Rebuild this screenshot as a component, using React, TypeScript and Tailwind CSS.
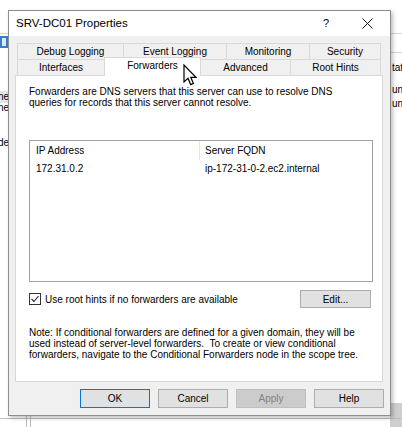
import React from 'react';

const font = { fontFamily: '"Liberation Sans", Arial, sans-serif' };

interface TabProps {
  label: string;
  width: string;
  selected?: boolean;
}

function Tab({ label, width, selected }: TabProps) {
  if (selected) {
    return (
      <div
        className={`${width} -ml-px relative z-10 -mt-[2px] h-[19px] bg-white border border-b-0 border-[#d9d9d9] flex items-start justify-center pt-[1px] text-[10px] leading-[13px] text-black`}
      >
        {label}
      </div>
    );
  }
  return (
    <div
      className={`${width} -ml-px first:ml-0 h-[16px] bg-[#f0f0f0] border border-b-0 border-[#d9d9d9] flex items-center justify-center text-[10px] leading-[13px] text-black`}
    >
      {label}
    </div>
  );
}

function Button({ label, primary, disabled }: { label: string; primary?: boolean; disabled?: boolean }) {
  let cls = 'bg-[#e1e1e1] border-[#adadad] text-black';
  if (primary) cls = 'bg-[#e1e1e1] border-[#0078d7] text-black';
  if (disabled) cls = 'bg-[#cccccc] border-[#bfbfbf] text-[#838383]';
  return (
    <div className={`w-[70px] h-[19px] border ${cls} flex items-center justify-center text-[10px]`}>
      {label}
    </div>
  );
}

export default function App() {
  return (
    <div className="relative w-[402px] h-[427px] bg-white overflow-hidden" style={font}>
      {/* window behind the dialog */}
      <div className="absolute left-0 top-[33px] w-full h-px bg-[#d5d5d5]" />
      <div className="absolute left-0 top-[36px] w-[8px] h-[12px] bg-[#3d7cc9]" />
      <div className="absolute left-[2px] top-[38px] w-[4px] h-[8px] bg-[#dbe8f7]" />
      <div className="absolute left-0 top-[91px] w-[9px] overflow-hidden flex flex-col items-end text-[10px] leading-[12px] text-black">
        <span className="bg-[#e5e5e5] pl-px">ne</span>
        <span className="mt-[-1px]">ne</span>
        <span className="mt-[23px]">de</span>
      </div>
      <div className="absolute left-[390px] top-[52px] w-[12px] h-px bg-[#d5d5d5]" />
      <div className="absolute left-[392px] top-[62px] text-[10px] leading-[12px] text-black">tat</div>
      <div className="absolute left-[392px] top-[84px] text-[10px] leading-[12px] text-black">un</div>
      <div className="absolute left-[392px] top-[98px] text-[10px] leading-[12px] text-black">un</div>
      <div className="absolute left-[390px] top-[403px] w-[12px] h-[24px] bg-[#cfcfcf]" />
      <div className="absolute left-0 top-[418px] w-full h-px bg-[#bdbdbd]" />
      <div className="absolute left-[26px] top-[415px] w-px h-[12px] bg-[#bdbdbd]" />
      <div className="absolute left-[30px] top-[415px] w-px h-[12px] bg-[#bdbdbd]" />

      {/* dialog */}
      <div className="absolute left-[8px] top-[10px] w-[383px] h-[406px] border border-[#8f8f8f] shadow-[2px_2px_4px_rgba(0,0,0,0.25)] flex flex-col">
        {/* title bar */}
        <div className="h-[25px] bg-white flex items-center pl-[7px] pr-[12px]">
          <span className="text-[11.5px] text-black">SRV-DC01 Properties</span>
          <span className="ml-auto text-[11px] text-black mr-[33px]">?</span>
          <svg width="11" height="11" viewBox="0 0 11 11" className="mr-[5px]">
            <path d="M0.5 0.5 L10.5 10.5 M10.5 0.5 L0.5 10.5" stroke="#111" strokeWidth="1" />
          </svg>
        </div>

        {/* body */}
        <div className="flex-1 bg-[#f0f0f0] flex flex-col pl-[6px] pr-[6px] pt-[7px]">
          {/* tabs */}
          <div className="pl-[2px] pr-[2px] flex flex-col">
            <div className="flex">
              <Tab label="Debug Logging" width="w-[107px]" />
              <Tab label="Event Logging" width="w-[104px]" />
              <Tab label="Monitoring" width="w-[84px]" />
              <Tab label="Security" width="w-[72px]" />
            </div>
            <div className="flex h-[16px]">
              <Tab label="Interfaces" width="w-[88px]" />
              <Tab label="Forwarders" width="w-[97px]" selected />
              <Tab label="Advanced" width="w-[91px]" />
              <Tab label="Root Hints" width="w-[91px]" />
            </div>
          </div>

          {/* panel */}
          <div className="mr-[1px] h-[307px] bg-white border border-[#d9d9d9] pl-[13px] pr-[9px] pt-[10px] flex flex-col text-[10px] leading-[11px] text-black">
            <p>
              Forwarders are DNS servers that this server can use to resolve DNS
              <br />
              queries for records that this server cannot resolve.
            </p>

            {/* list */}
            <div className="mt-[32px] h-[142px] border border-[#a0a0a0] bg-white flex flex-col">
              <div className="flex h-[19px] items-center">
                <div className="w-[170px] pl-[6px] h-full flex items-center border-r border-[#e5e5e5]">IP Address</div>
                <div className="pl-[5px]">Server FQDN</div>
              </div>
              <div className="flex h-[17px] items-center">
                <div className="w-[170px] pl-[6px]">172.31.0.2</div>
                <div className="pl-[5px]">ip-172-31-0-2.ec2.internal</div>
              </div>
            </div>

            {/* checkbox row */}
            <div className="mt-[8px] flex items-center h-[18px]">
              <div className="w-[12px] h-[12px] border border-[#333] bg-white flex items-center justify-center">
                <svg width="10" height="10" viewBox="0 0 10 10">
                  <path d="M1.5 5 L4 7.5 L8.5 2" stroke="#222" strokeWidth="1.1" fill="none" />
                </svg>
              </div>
              <span className="ml-[4px]">Use root hints if no forwarders are available</span>
              <div className="ml-auto mr-[2px] w-[71px] h-[18px] bg-[#e1e1e1] border border-[#adadad] flex items-center justify-center">
                Edit...
              </div>
            </div>

            {/* note */}
            <p className="mt-[19px]">
              Note: If conditional forwarders are defined for a given domain, they will be
              <br />
              used instead of server-level forwarders.&nbsp; To create or view conditional
              <br />
              forwarders, navigate to the Conditional Forwarders node in the scope tree.
            </p>
          </div>

          {/* buttons */}
          <div className="mt-[7px] flex justify-end gap-[8px]">
            <Button label="OK" primary />
            <Button label="Cancel" />
            <Button label="Apply" disabled />
            <Button label="Help" />
          </div>
        </div>
      </div>

      {/* mouse pointer */}
      <svg
        className="absolute left-[183px] top-[64px] z-20 w-[14px] h-[22px]"
        width="14"
        height="22"
        viewBox="0 0 14 22"
      >
        <path
          d="M1 1 L1 18 L5 14.3 L7.7 20.6 L10.4 19.4 L7.8 13.3 L13 13.3 Z"
          fill="#ffffff"
          stroke="#000000"
          strokeWidth="1.2"
          strokeLinejoin="miter"
        />
      </svg>
    </div>
  );
}
